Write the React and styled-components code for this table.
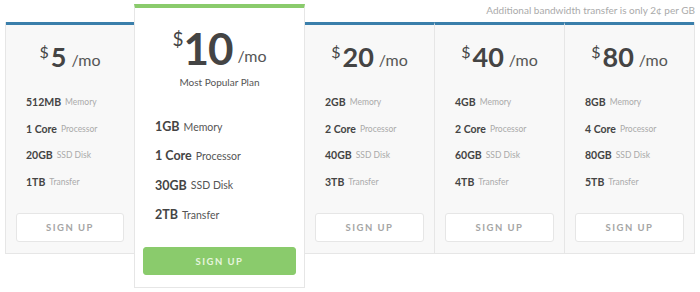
import styled, { createGlobalStyle } from "styled-components"

const plans = [
    { price: 5, memory: "512MB", cores: "1 Core", disk: "20GB", transfer: "1TB" },
    { price: 10, memory: "1GB", cores: "1 Core", disk: "30GB", transfer: "2TB", popular: true },
    { price: 20, memory: "2GB", cores: "2 Core", disk: "40GB", transfer: "3TB" },
    { price: 40, memory: "4GB", cores: "2 Core", disk: "60GB", transfer: "4TB" },
    { price: 80, memory: "8GB", cores: "4 Core", disk: "80GB", transfer: "5TB" },
]

const GlobalStyle = createGlobalStyle`
    * { box-sizing: border-box; }
    body {
        margin: 0;
        background: #fff;
        font-family: Lato, "Open Sans", sans-serif;
        color: #444;
    }
`

const Features = ({ plan, big }) => (
    <FeatureList $big={big}>
        <Feature $big={big}><Value>{plan.memory}</Value> <Label $big={big}>Memory</Label></Feature>
        <Feature $big={big}><Value>{plan.cores}</Value> <Label $big={big}>Processor</Label></Feature>
        <Feature $big={big}><Value>{plan.disk}</Value> <Label $big={big}>SSD Disk</Label></Feature>
        <Feature $big={big}><Value>{plan.transfer}</Value> <Label $big={big}>Transfer</Label></Feature>
    </FeatureList>
)

const Plan = ({ plan, divider }) => (
    <Panel $divider={divider}>
        <Price>
            <Dollar>$</Dollar>
            <Amount>{plan.price}</Amount>
            <Per>/mo</Per>
        </Price>
        <Features plan={plan} />
        <Button>Sign Up</Button>
    </Panel>
)

const Popular = ({ plan }) => (
    <Featured>
        <Price $big>
            <Dollar $big>$</Dollar>
            <Amount $big>{plan.price}</Amount>
            <Per $big>/mo</Per>
        </Price>
        <Tagline>Most Popular Plan</Tagline>
        <Features plan={plan} big />
        <GreenButton>Sign Up</GreenButton>
    </Featured>
)

const App = () => {
    const [first, popular, ...rest] = plans
    return (
        <>
            <GlobalStyle />
            <Wrapper>
                <Side>
                    <Plan plan={first} />
                </Side>
                <Popular plan={popular} />
                <RightSide>
                    <Note>Additional bandwidth transfer is only 2¢ per GB</Note>
                    <Group>
                        {rest.map((p, i) => (
                            <Plan key={p.price} plan={p} divider={i > 0} />
                        ))}
                    </Group>
                </RightSide>
            </Wrapper>
        </>
    )
}

const Wrapper = styled.div`
    display: flex;
    align-items: flex-start;
    padding: 4px 5px;
    width: 700px;
`

const Side = styled.div`
    display: flex;
    margin-top: 18px;
    width: 129px;
    border-left: 1px solid #e6e6e6;
`

const RightSide = styled.div`
    display: flex;
    flex-direction: column;
    flex: 1;
`

const Note = styled.div`
    height: 18px;
    text-align: right;
    font-size: 10px;
    line-height: 12px;
    color: #aaa;
`

const Group = styled.div`
    display: flex;
    border-right: 1px solid #e6e6e6;
`

const Panel = styled.div`
    flex: 1;
    display: flex;
    flex-direction: column;
    height: 232px;
    background: #f8f8f8;
    border-top: 3px solid #3a7fab;
    border-bottom: 1px solid #e6e6e6;
    border-left: ${p => (p.$divider ? "1px solid #e6e6e6" : "none")};
    padding: 18px 10px 11px;
`

const Featured = styled.div`
    width: 171px;
    display: flex;
    flex-direction: column;
    height: 284px;
    background: #fff;
    border: 1px solid #e6e6e6;
    border-top: 4px solid #8acb6c;
    padding: 18px 8px 11px;
`

const Price = styled.div`
    display: flex;
    justify-content: center;
    align-items: flex-start;
    height: ${p => (p.$big ? "43px" : "28px")};
    color: #444;
`

const Dollar = styled.span`
    font-size: ${p => (p.$big ? "19px" : "16px")};
    line-height: 1;
    margin-top: ${p => (p.$big ? "3px" : "1px")};
    margin-right: ${p => (p.$big ? "0" : "2px")};
`

const Amount = styled.span`
    font-size: ${p => (p.$big ? "44px" : "27px")};
    line-height: 1;
    font-weight: 700;
    letter-spacing: ${p => (p.$big ? "-1px" : "0")};
`

const Per = styled.span`
    align-self: flex-end;
    font-size: 16px;
    line-height: 1;
    margin-left: 5px;
    margin-bottom: ${p => (p.$big ? "5px" : "3px")};
    color: #555;
`

const Tagline = styled.div`
    margin-top: 6px;
    text-align: center;
    font-size: 10px;
    line-height: 14px;
    color: #555;
`

const FeatureList = styled.ul`
    list-style: none;
    margin: ${p => (p.$big ? "23px 0 18px" : "18px 0 18px")};
    padding: ${p => (p.$big ? "0 0 0 12px" : "0 0 0 10px")};
`

const Feature = styled.li`
    height: ${p => (p.$big ? "29.3px" : "26.5px")};
    display: flex;
    align-items: center;
    gap: 4px;
    font-size: ${p => (p.$big ? "12.5px" : "10.5px")};
    white-space: nowrap;
`

const Value = styled.span`
    font-weight: 700;
    color: #444;
`

const Label = styled.span`
    font-size: ${p => (p.$big ? "10.5px" : "8.5px")};
    color: ${p => (p.$big ? "#555" : "#aaa")};
`

const Button = styled.button`
    height: 29px;
    width: 100%;
    background: #fff;
    border: 1px solid #e6e6e6;
    border-radius: 3px;
    font-family: inherit;
    font-size: 9.5px;
    font-weight: 700;
    letter-spacing: 1.5px;
    text-transform: uppercase;
    color: #a5a5a5;
`

const GreenButton = styled(Button)`
    height: 28px;
    background: #8acb6c;
    border-color: #8acb6c;
    color: #e6f5de;
`

export default App
